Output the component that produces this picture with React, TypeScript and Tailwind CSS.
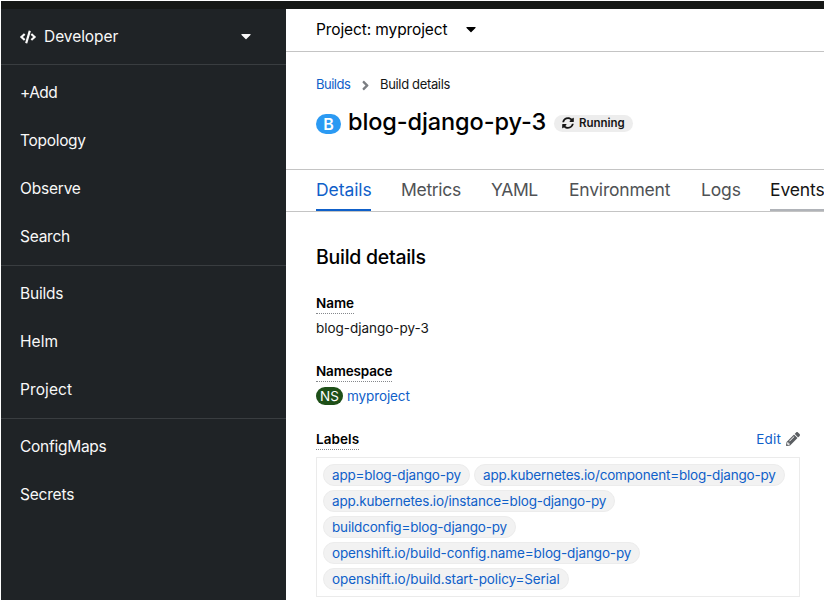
import React from "react";
import { FaCode, FaCaretDown, FaSyncAlt, FaPencilAlt, FaAngleRight } from "react-icons/fa";

type Item = { text: string; cls: string };

const navGroups: Item[][] = [
  [
    { text: "+Add", cls: "tracking-[-0.54px]" },
    { text: "Topology", cls: "tracking-[-0.3px]" },
    { text: "Observe", cls: "tracking-[-0.2px]" },
    { text: "Search", cls: "tracking-[-0.25px]" },
  ],
  [
    { text: "Builds", cls: "tracking-[-0.2px]" },
    { text: "Helm", cls: "tracking-[0.1px]" },
    { text: "Project", cls: "tracking-[0.1px]" },
  ],
  [
    { text: "ConfigMaps", cls: "tracking-[-0.27px]" },
    { text: "Secrets", cls: "tracking-[-0.2px]" },
  ],
];

const tabs: Item[] = [
  { text: "Details", cls: "w-[55px] tracking-[-0.07px] text-[#0f60c9] border-[#0f60c9]" },
  { text: "Metrics", cls: "w-[60px] tracking-[-0.31px] text-[#4f5255] border-transparent" },
  { text: "YAML", cls: "w-[48px] tracking-[-0.39px] text-[#4f5255] border-transparent" },
  { text: "Environment", cls: "w-[102px] tracking-[-0.2px] text-[#4f5255] border-transparent" },
  { text: "Logs", cls: "w-[39px] tracking-[-0.14px] text-[#4f5255] border-transparent" },
  { text: "Events", cls: "w-[55px] tracking-[-0.12px] text-[#151515] border-[#b0b3b8]" },
];

const labels: Item[] = [
  { text: "app=blog-django-py", cls: "w-[147px] tracking-[-0.2px]" },
  { text: "app.kubernetes.io/component=blog-django-py", cls: "w-[311px] tracking-[-0.19px]" },
  { text: "app.kubernetes.io/instance=blog-django-py", cls: "w-[292px] tracking-[-0.2px]" },
  { text: "buildconfig=blog-django-py", cls: "w-[193px] tracking-[-0.18px]" },
  { text: "openshift.io/build-config.name=blog-django-py", cls: "w-[317px] tracking-[-0.12px]" },
  { text: "openshift.io/build.start-policy=Serial", cls: "w-[246px] tracking-[-0.11px]" },
];

function Sidebar() {
  return (
    <nav className="w-[285px] shrink-0 bg-[#1f2326] text-[15.5px] text-[#f8f8f8]">
      <div className="flex h-14 items-center border-b border-[#393d40] pl-[19px] pr-8">
        <FaCode className="size-4" />
        <span className="ml-2 grow tracking-[-0.06px]">Developer</span>
        <FaCaretDown className="mb-0.5 size-4" />
      </div>
      {navGroups.map((group, i) => (
        <ul
          key={i}
          className={
            "border-[#393d40] " +
            (i === 0 ? "border-b py-1" : i === 1 ? "border-b py-1" : "py-1")
          }
        >
          {group.map((item) => (
            <li key={item.text} className={"flex h-12 items-center pl-[19px] " + item.cls}>
              {item.text}
            </li>
          ))}
        </ul>
      ))}
    </nav>
  );
}

function Term({ text, cls }: Item) {
  return (
    <div className="flex h-5">
      <span className={"h-[21px] border-b border-dotted border-[#85888c] font-semibold leading-5 text-black " + cls}>
        {text}
      </span>
    </div>
  );
}

function Main() {
  return (
    <main className="flex min-w-0 grow flex-col overflow-hidden bg-white">
      <div className="flex h-[43px] shrink-0 items-center border-b border-[#c4c4c4] pl-[30px] text-[15.5px] text-black">
        <span className="w-[132px] tracking-[-0.11px]">Project: myproject</span>
        <FaCaretDown className="mb-0.5 ml-[15px] size-4" />
      </div>
      <div className="mt-[23px] flex h-5 shrink-0 items-center pl-[30px] text-[13px]">
        <a className="w-[35px] tracking-[-0.49px] text-[#0f60c9]">Builds</a>
        <FaAngleRight className="ml-[7px] size-[15px] text-[#7b7e82]" />
        <span className="ml-[7px] tracking-[-0.34px]">Build details</span>
      </div>
      <div className="mt-[9px] flex h-9 shrink-0 items-center pl-[30px]">
        <span className="mt-1 flex h-5 w-[25px] items-center justify-center rounded-full bg-[#2b9af3] text-[16px] font-semibold text-white">
          B
        </span>
        <h1 className="ml-[7px] w-[206px] text-[23.5px] font-medium tracking-[-0.1px] text-black">blog-django-py-3</h1>
        <span className="mt-[2px] flex h-[17px] w-[79px] items-center rounded-full bg-[#ededed] pl-2 text-[11.5px] font-semibold tracking-[-0.03px]">
          <FaSyncAlt className="mr-[5px] size-3" />
          <span className="pt-px">Running</span>
        </span>
      </div>
      <div className="mt-[29px] flex h-[43px] shrink-0 gap-[30px] border-y border-[#c4c4c4] pl-[30px] text-[17.5px]">
        {tabs.map((tab) => (
          <a key={tab.text} className={"flex shrink-0 items-center whitespace-nowrap border-b-2 pt-0.5 " + tab.cls}>
            {tab.text}
          </a>
        ))}
      </div>
      <section className="flex flex-col pl-[30px] pr-6 text-[13.5px]">
        <h2 className="mt-8 h-[26px] text-[19.5px] font-medium leading-[26px] tracking-[-0.27px] text-black">
          Build details
        </h2>
        <div className="mt-[23px]">
          <Term text="Name" cls="tracking-[-0.02px]" />
          <div className="mt-[5px] h-5 leading-5 tracking-[-0.03px]">blog-django-py-3</div>
        </div>
        <div className="mt-[23px]">
          <Term text="Namespace" cls="tracking-[-0.16px]" />
          <div className="mt-[5px] flex h-5 items-center">
            <span className="flex h-[18px] w-[27px] items-center justify-center rounded-full bg-[#1e4f18] text-[13.5px] text-white">
              NS
            </span>
            <a className="ml-1 tracking-[-0.1px] text-[#0f60c9]">myproject</a>
          </div>
        </div>
        <div className="mt-[23px] flex justify-between">
          <Term text="Labels" cls="tracking-[0.08px]" />
          <a className="flex h-5 items-center tracking-[0.2px] text-[#0f60c9]">
            Edit
            <FaPencilAlt className="ml-[5px] size-[14px] text-[#5b5e62]" />
          </a>
        </div>
        <ul className="mt-2 flex h-[140px] w-[484px] flex-wrap content-start gap-1 border border-[#ebebeb] pl-[6px] pt-[6px]">
          {labels.map((label) => (
            <li
              key={label.text}
              className={
                "flex h-[22px] items-center whitespace-nowrap rounded-full border border-[#ececec] bg-[#f2f2f2] pl-2 text-[#0f60c9] " +
                label.cls
              }
            >
              {label.text}
            </li>
          ))}
        </ul>
      </section>
    </main>
  );
}

export default function App() {
  return (
    <div className="flex h-[601px] w-[825px] flex-col overflow-hidden bg-white p-px font-[Inter,'Liberation_Sans',sans-serif] text-[#151515]">
      <div className="h-2 shrink-0 bg-[#161816]" />
      <div className="flex min-h-0 grow">
        <Sidebar />
        <Main />
      </div>
    </div>
  );
}
